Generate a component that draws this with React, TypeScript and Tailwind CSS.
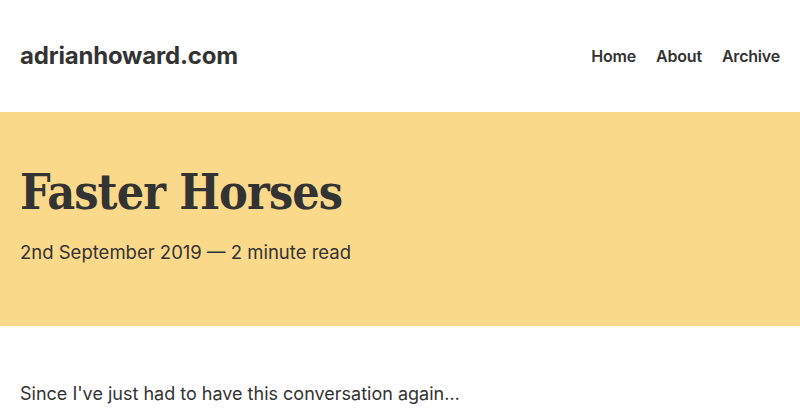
export default function App() {
  return (
    <div className="min-h-screen bg-white text-[#333333] font-['Inter','Noto_Sans',sans-serif]">
      <header className="flex h-[112px] items-center justify-between px-5">
        <a className="text-[24px] font-bold tracking-[-0.2px]">adrianhoward.com</a>
        <nav className="flex gap-5 text-[16px] font-semibold tracking-[-0.2px]">
          <a>Home</a>
          <a>About</a>
          <a>Archive</a>
        </nav>
      </header>

      <section className="h-[214px] bg-[#fbd98b] px-5 pt-[54px]">
        <h1 className="text-[48px] font-bold leading-[1.1] font-['DejaVu_Serif_Condensed','DejaVu_Serif',serif] tracking-[-0.9px]">
          Faster Horses
        </h1>
        <p className="mt-[20px] text-[18.5px]">2nd September 2019 — 2 minute read</p>
      </section>

      <main className="px-5 pt-[54px]">
        <p className="text-[18px]">Since I've just had to have this conversation again…</p>
      </main>
    </div>
  );
}
